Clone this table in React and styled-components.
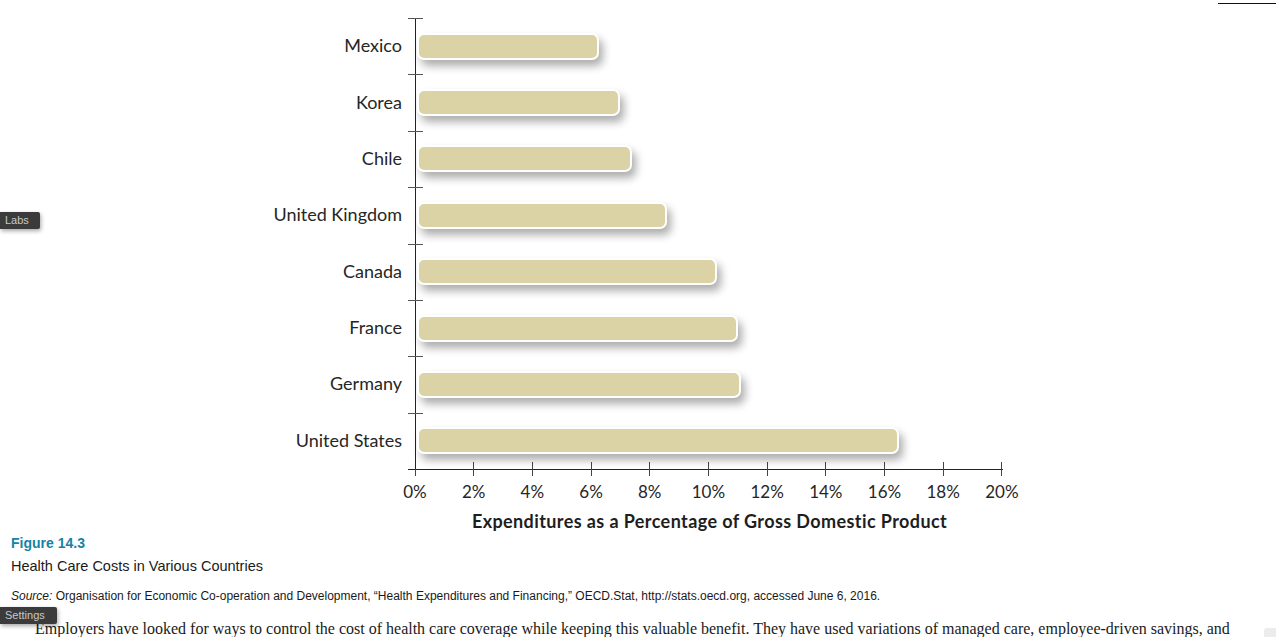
import React from "react";
import styled, { createGlobalStyle } from "styled-components";

const GlobalStyle = createGlobalStyle`
  body {
    margin: 0;
    background: #fff;
  }
`;

// percent of GDP, read off the figure
const countries = [
  { name: "Mexico", value: 6.27 },
  { name: "Korea", value: 6.97 },
  { name: "Chile", value: 7.38 },
  { name: "United Kingdom", value: 8.57 },
  { name: "Canada", value: 10.28 },
  { name: "France", value: 11.0 },
  { name: "Germany", value: 11.1 },
  { name: "United States", value: 16.48 }
];

const ticks = [0, 2, 4, 6, 8, 10, 12, 14, 16, 18, 20];
const PX_PER_PCT = 29.35;

const Page = styled.div`
  position: relative;
  width: 1276px;
  height: 637px;
  overflow: hidden;
`;

const Chart = styled.div`
  padding-top: 18px;
`;

const Row = styled.div`
  display: grid;
  grid-template-columns: 415px 1fr;
  height: 56.375px;
  align-items: center;
`;

const Label = styled.div`
  text-align: right;
  padding-right: 13px;
  margin-top: -2px;
  font-family: Lato, "Liberation Sans", sans-serif;
  font-size: 18px;
  color: #262626;
`;

const Plot = styled.div`
  position: relative;
  height: 100%;
  display: flex;
  align-items: center;
  border-left: 1px solid #222;

  &::before {
    content: "";
    position: absolute;
    top: 0;
    left: -8px;
    width: 15px;
    height: 1px;
    background: #555;
  }
`;

const Bar = styled.div`
  box-sizing: border-box;
  height: 27px;
  margin-left: 1px;
  border: 2px solid #fff;
  border-radius: 7px;
  background: #dbd3a6;
  box-shadow: 4px 6px 9px rgba(0, 0, 0, 0.32);
`;

const XAxis = styled.div`
  margin-left: 408px;
  width: 595px;
  border-top: 1px solid #222;
`;

const TickRow = styled.div`
  display: flex;
  justify-content: space-between;
  width: 627px;
  margin: -8px 0 0 395px;
`;

const Tick = styled.div`
  width: 40px;
  display: flex;
  flex-direction: column;
  align-items: center;
`;

const TickMark = styled.div`
  width: 1px;
  height: 14px;
  background: #444;
`;

const TickLabel = styled.div`
  margin-top: 6px;
  line-height: 20px;
  font-family: Lato, "Liberation Sans", sans-serif;
  font-size: 17px;
  color: #262626;
`;

const AxisTitle = styled.div`
  margin: 9px 0 0 415px;
  width: 589px;
  text-align: center;
  line-height: 20px;
  font-family: Lato, "Liberation Sans", sans-serif;
  font-weight: 700;
  font-size: 18px;
  letter-spacing: 0.4px;
  color: #1e1e1e;
`;

const Caption = styled.div`
  padding-left: 11px;
  font-family: "Liberation Sans", Arial, sans-serif;
  color: #1a1a1a;
`;

const FigNum = styled.div`
  margin-top: 4px;
  line-height: 16px;
  font-size: 14px;
  font-weight: 700;
  color: #1683a6;
`;

const FigTitle = styled.div`
  margin-top: 6px;
  line-height: 18px;
  font-size: 14.5px;
`;

const Source = styled.div`
  margin-top: 13px;
  line-height: 16px;
  font-size: 12px;

  em {
    font-style: italic;
  }
`;

const Body = styled.p`
  margin: 15px 0 0;
  padding-left: 11px;
  text-indent: 24px;
  line-height: 20px;
  font-family: "Liberation Serif", "Times New Roman", serif;
  font-size: 16px;
  color: #1a1a1a;
  white-space: nowrap;
`;

const SideTab = styled.div`
  position: absolute;
  left: 0;
  top: ${(p) => p.top}px;
  width: ${(p) => p.w}px;
  height: 17px;
  box-sizing: border-box;
  padding-left: 5px;
  line-height: 17px;
  background: #3b3b3b;
  border-radius: 0 2px 2px 0;
  box-shadow: 1px 2px 4px rgba(0, 0, 0, 0.35);
  font-family: "Liberation Sans", Arial, sans-serif;
  font-size: 11px;
  color: #c8c8c8;
`;

const HeaderRule = styled.div`
  position: absolute;
  top: 3px;
  right: 0;
  width: 58px;
  height: 1px;
  background: #111;
`;

const CornerChip = styled.div`
  position: absolute;
  left: 1264px;
  top: 628px;
  width: 16px;
  height: 12px;
  border-radius: 3px;
  background: #ececec;
`;

export default function App() {
  return (
    <Page>
      <GlobalStyle />
      <HeaderRule />
      <Chart>
        {countries.map((c) => (
          <Row key={c.name}>
            <Label>{c.name}</Label>
            <Plot>
              <Bar style={{ width: c.value * PX_PER_PCT - 2 }} />
            </Plot>
          </Row>
        ))}
        <XAxis />
        <TickRow>
          {ticks.map((t) => (
            <Tick key={t}>
              <TickMark />
              <TickLabel>{t}%</TickLabel>
            </Tick>
          ))}
        </TickRow>
        <AxisTitle>Expenditures as a Percentage of Gross Domestic Product</AxisTitle>
      </Chart>
      <Caption>
        <FigNum>Figure 14.3</FigNum>
        <FigTitle>Health Care Costs in Various Countries</FigTitle>
        <Source>
          <em>Source:</em> Organisation for Economic Co-operation and Development, “Health
          Expenditures and Financing,” OECD.Stat, http://stats.oecd.org, accessed June 6, 2016.
        </Source>
      </Caption>
      <Body>
        Employers have looked for ways to control the cost of health care coverage while keeping
        this valuable benefit. They have used variations of managed care, employee-driven savings, and
      </Body>
      <SideTab top={212} w={40}>Labs</SideTab>
      <SideTab top={607} w={57}>Settings</SideTab>
      <CornerChip />
    </Page>
  );
}
